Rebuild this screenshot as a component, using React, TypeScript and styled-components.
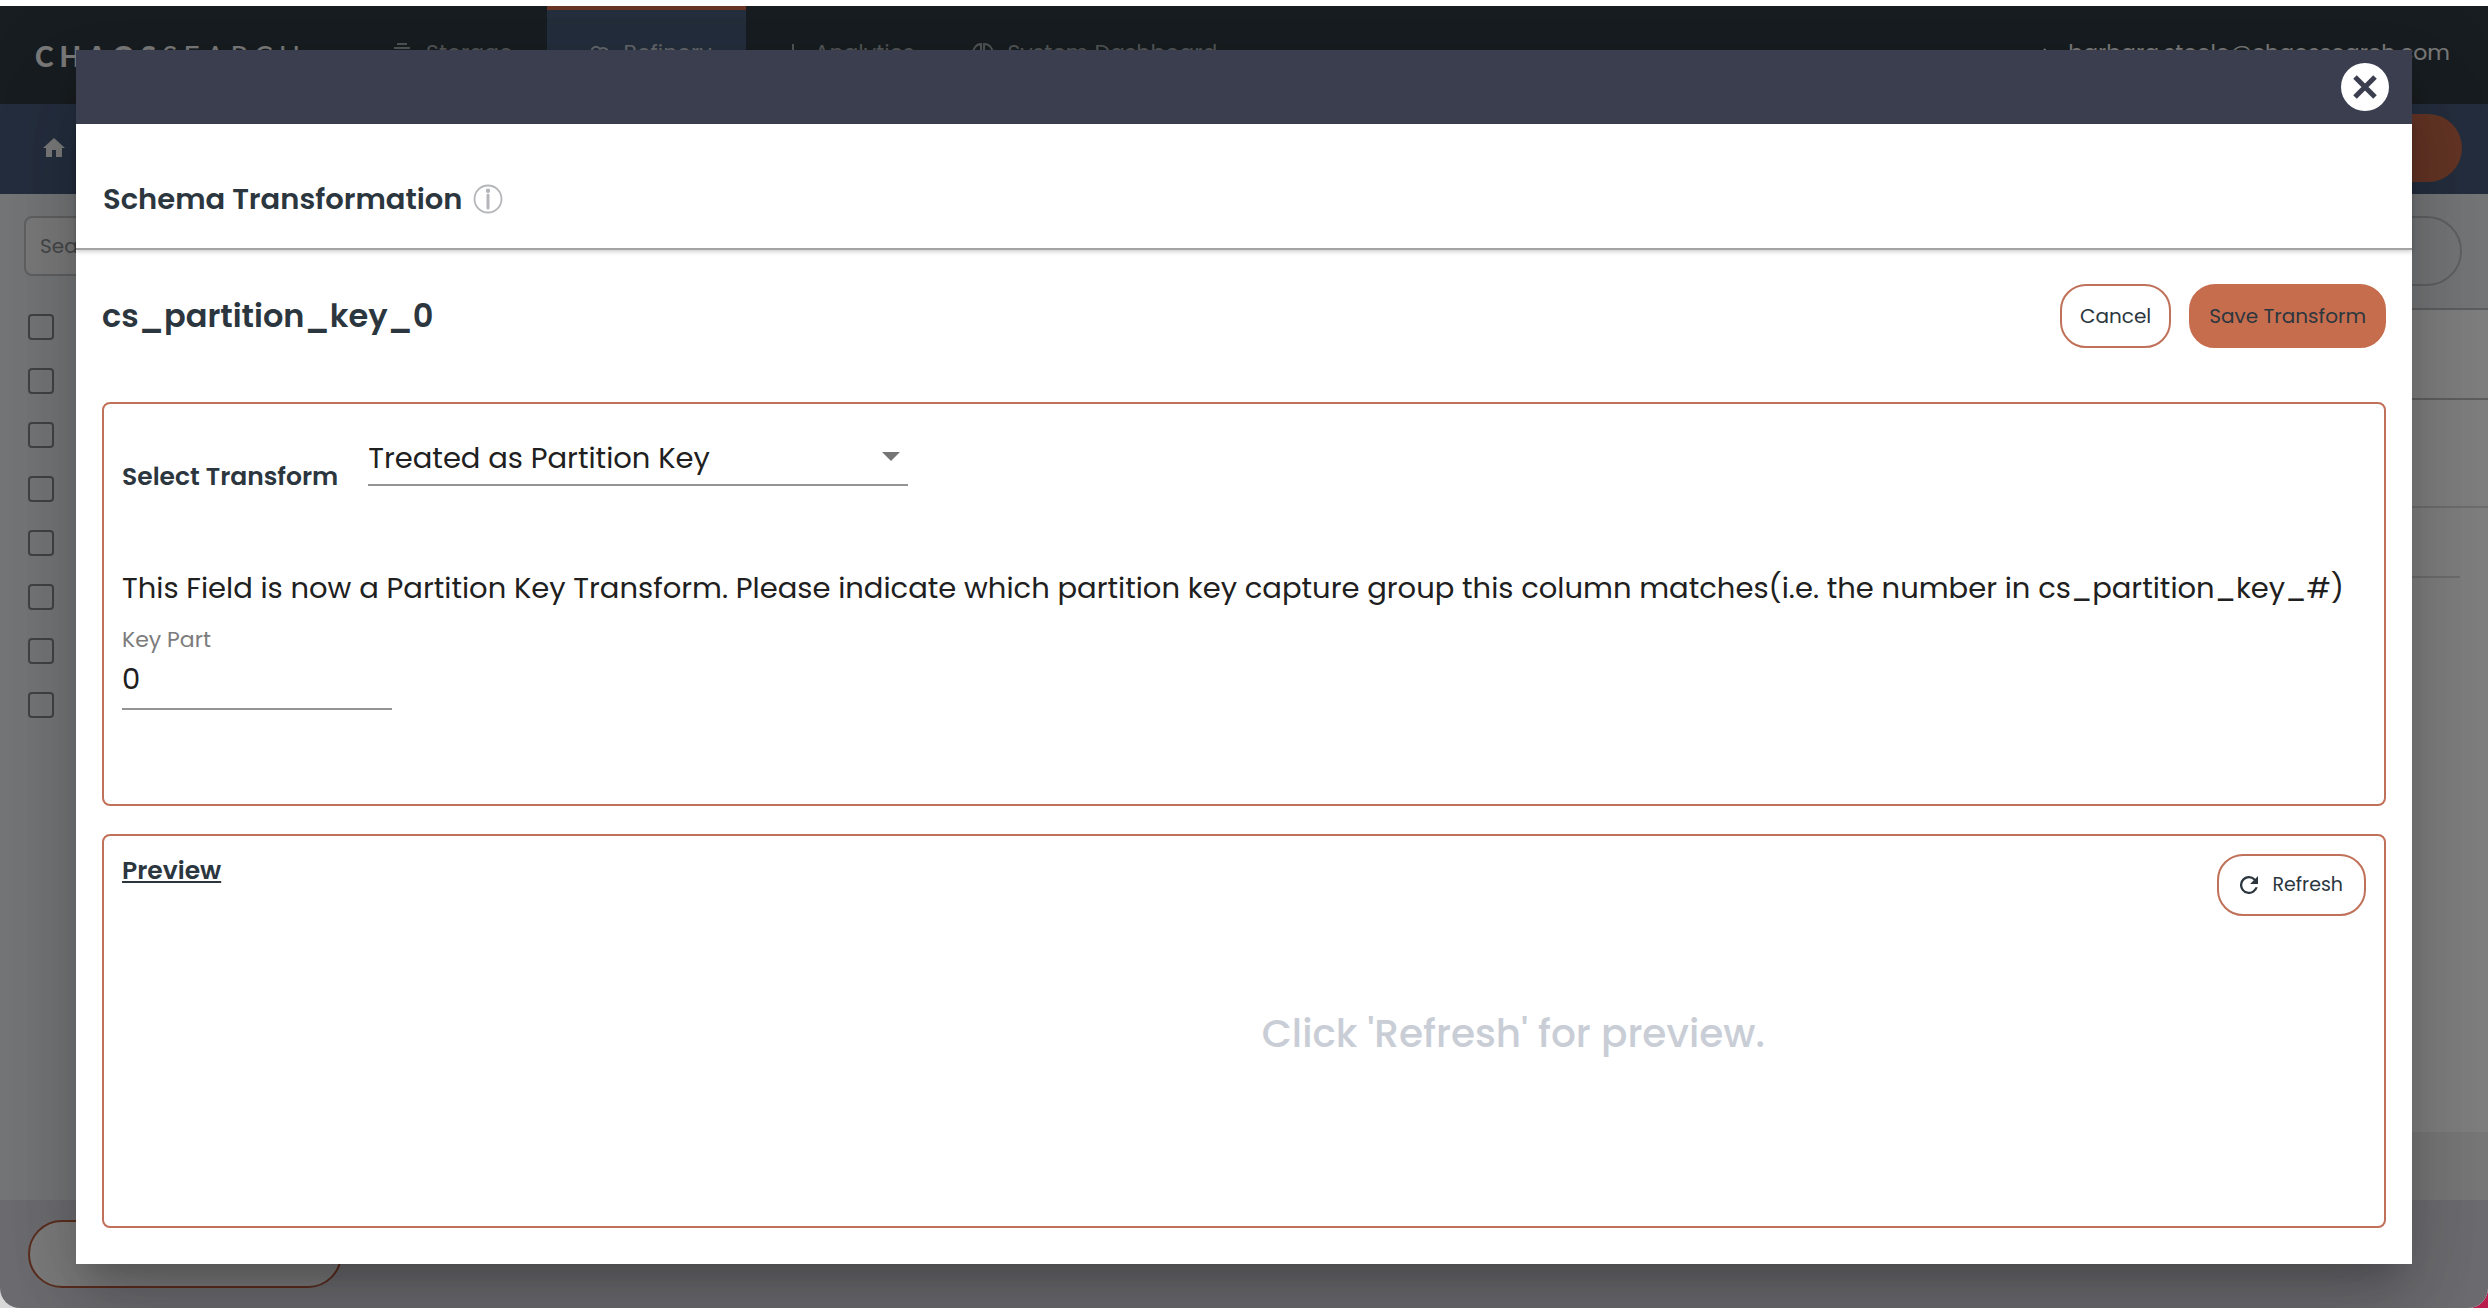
import React, { useState } from "react";
import styled, { createGlobalStyle } from "styled-components";

const color = {
  accent: "#c66d4e",
  outline: "#c07159",
  ink: "#2b363e",
  text: "#202020",
  muted: "#7c7c7c",
  rule: "#949494",
  bar: "#3a3e4f",
  hint: "#c9cdd6",
};

const GlobalStyle = createGlobalStyle`
  *, *::before, *::after { box-sizing: border-box; }
  body { margin: 0; background: #ffffff; }
  body, button, input, select { font-family: Poppins, Inter, "Liberation Sans", sans-serif; }
  h1, h2, h3, p { margin: 0; }
  button { cursor: pointer; }
`;

const Desktop = styled.div`
  min-height: 100vh;
  padding-top: 6px;
  display: flex;
  background: linear-gradient(90deg, #d8d8d8 50%, #b81d4e 50%);
`;

const Window = styled.div`
  position: relative;
  flex: 1;
  display: flex;
  flex-direction: column;
  overflow: hidden;
  border-radius: 0 0 20px 20px;
  background: #ebedef;
  box-shadow: 0 -6px 0 #ffffff;
`;

const Header = styled.header`
  display: flex;
  justify-content: space-between;
  height: 98px;
  padding-right: 38px;
  background: #2e3a40;
`;

const HeaderStart = styled.div`
  display: flex;
`;

const Logo = styled.span`
  width: 349px;
  padding: 32px 0 0 35px;
  font: 900 28px/36px Lato, sans-serif;
  letter-spacing: 6px;
  color: #f4f4f4;
  span { font-weight: 400; }
`;

const Nav = styled.nav`
  display: flex;
`;

const Tab = styled.a<{ $active?: boolean; $compact?: boolean }>`
  display: flex;
  gap: 13px;
  padding: ${(p) => (p.$compact ? "28px 24px 0 34px" : "28px 34px 0 42px")};
  border-top: 4px solid ${(p) => (p.$active ? "#d2694a" : "transparent")};
  background: ${(p) => (p.$active ? "#485d78" : "transparent")};
  color: ${(p) => (p.$active ? "#c9ced4" : "#a3a8ac")};
  font-size: 22px;
  line-height: 30px;
  text-decoration: none;
  svg { width: 22px; margin-top: 5px; }
`;

const Account = styled.button`
  display: flex;
  align-items: flex-start;
  gap: 16px;
  padding: 32px 0 0;
  border: 0;
  background: none;
  color: #f4f4f4;
  font-size: 22px;
  line-height: 30px;
  svg { margin-top: 10px; }
`;

const SubNav = styled.div`
  display: flex;
  align-items: center;
  justify-content: space-between;
  height: 90px;
  padding: 0 26px 2px 43px;
  background: #485d7c;
`;

const HomeLink = styled.a`
  display: flex;
  color: #f4f4f4;
`;

const PrimaryAction = styled.button`
  width: 240px;
  height: 68px;
  border: 0;
  border-radius: 34px;
  background: #c96a4a;
`;

const Workspace = styled.main`
  flex: 1;
  display: flex;
`;

const Sidebar = styled.aside`
  width: 30%;
  padding: 22px 24px;
`;

const SearchBox = styled.input`
  display: block;
  width: 100%;
  height: 60px;
  padding: 0 14px;
  border: 2px solid #c0c2c4;
  border-radius: 8px;
  background: #f4f4f4;
  font-size: 20px;
  &::placeholder { color: #8b8f93; opacity: 1; }
`;

const FilterList = styled.div`
  display: flex;
  flex-direction: column;
  gap: 28px;
  padding: 38px 4px;
`;

const Tick = styled.input`
  appearance: none;
  width: 26px;
  height: 26px;
  margin: 0;
  border: 2px solid #85878a;
  border-radius: 4px;
`;

const Results = styled.section`
  flex: 1;
  display: flex;
  flex-direction: column;
  background: #ffffff;
`;

const ResultTools = styled.div`
  display: flex;
  justify-content: flex-end;
  height: 116px;
  padding: 22px 26px 0;
  border-bottom: 2px solid #bcbec0;
  background: #ebedef;
`;

const ToolPill = styled.button`
  width: 240px;
  height: 70px;
  border: 2px solid #c0c2c6;
  border-radius: 35px;
  background: transparent;
`;

const ResultRow = styled.div<{ $height: number; $tone: string; $inset?: number }>`
  height: ${(p) => p.$height}px;
  margin-right: ${(p) => p.$inset ?? 0}px;
  border-bottom: 2px solid ${(p) => p.$tone};
`;

const ResultFoot = styled.div`
  height: 68px;
  margin-top: auto;
  background: #f0f1f3;
`;

const Footer = styled.footer`
  display: flex;
  height: 108px;
  padding: 20px 28px;
  background: #dadae2;
`;

const FooterPill = styled.button`
  width: 314px;
  height: 68px;
  border: 2px solid #b85c3f;
  border-radius: 34px;
  background: #f8f8f8;
`;

const Overlay = styled.div`
  position: absolute;
  inset: 0;
  display: flex;
  padding: 44px 76px;
  background: rgba(0, 0, 0, 0.5);
`;

const Dialog = styled.section`
  flex: 1;
  display: flex;
  flex-direction: column;
  min-width: 0;
  background: #ffffff;
  box-shadow: 0 22px 30px -14px rgba(0, 0, 0, 0.2), 0 48px 76px 6px rgba(0, 0, 0, 0.14),
    0 18px 92px 16px rgba(0, 0, 0, 0.08);
`;

const DialogBar = styled.div`
  display: flex;
  align-items: center;
  justify-content: flex-end;
  height: 74px;
  padding: 0 23px;
  background: ${color.bar};
`;

const CloseButton = styled.button`
  display: grid;
  place-items: center;
  width: 48px;
  height: 48px;
  padding: 0;
  border: 0;
  border-radius: 50%;
  background: #ffffff;
  color: ${color.bar};
`;

const DialogTitle = styled.div`
  display: flex;
  align-items: center;
  gap: 10px;
  padding: 52px 27px 26px;
  border-bottom: 2px solid #a3a3a3;
  box-shadow: 0 2px 4px rgba(0, 0, 0, 0.18);
  color: ${color.ink};
  h1 { font-size: 29px; line-height: 46px; font-weight: 600; }
  svg { color: #b4b6b9; }
`;

const DialogBody = styled.div`
  flex: 1;
  display: flex;
  flex-direction: column;
  padding: 34px 26px 36px;
`;

const FieldHeader = styled.div`
  display: flex;
  align-items: center;
  justify-content: space-between;
  margin-bottom: 54px;
  color: ${color.ink};
  h2 { font-size: 32px; line-height: 46px; font-weight: 600; }
`;

const Actions = styled.div`
  display: flex;
  gap: 18px;
`;

const Button = styled.button<{ $filled?: boolean; $compact?: boolean }>`
  display: flex;
  align-items: center;
  justify-content: center;
  gap: 14px;
  height: ${(p) => (p.$compact ? 62 : 64)}px;
  padding: 0 ${(p) => (p.$compact ? 21 : 18)}px;
  border: 2px solid ${(p) => (p.$filled ? color.accent : color.outline)};
  border-radius: 26px;
  background: ${(p) => (p.$filled ? color.accent : "#ffffff")};
  color: ${color.ink};
  font-size: ${(p) => (p.$compact ? 19 : 20)}px;
  line-height: 30px;
`;

const Panel = styled.section<{ $grow?: boolean }>`
  display: flex;
  flex-direction: column;
  flex: ${(p) => (p.$grow ? 1 : "none")};
  padding: 18px;
  border: 2px solid ${color.outline};
  border-radius: 8px;
  & + & { margin-top: 28px; }
`;

const SelectRow = styled.div`
  display: flex;
  align-items: flex-end;
  gap: 30px;
  padding: 12px 0 71px;
`;

const SelectLabel = styled.label`
  color: ${color.ink};
  font-size: 25px;
  line-height: 34px;
  font-weight: 600;
`;

const SelectBox = styled.div`
  display: grid;
  align-items: center;
  width: 540px;
  margin-bottom: 8px;
  svg { grid-area: 1 / 1; justify-self: end; margin: 0 8px 8px 0; color: #757575; pointer-events: none; }
`;

const Select = styled.select`
  grid-area: 1 / 1;
  appearance: none;
  width: 100%;
  height: 52px;
  padding: 0 40px 3px 0;
  border: 0;
  border-bottom: 2px solid ${color.rule};
  border-radius: 0;
  background: transparent;
  color: ${color.text};
  font-size: 29px;
  line-height: 46px;
`;

const Message = styled.p`
  color: ${color.text};
  font-size: 29px;
  line-height: 46px;
`;

const KeyField = styled.div`
  display: flex;
  flex-direction: column;
  width: 270px;
  padding-top: 14px;
  margin-bottom: 76px;
  label { color: ${color.muted}; font-size: 22px; line-height: 30px; }
  input {
    height: 55px;
    padding: 0 0 4px;
    border: 0;
    border-bottom: 2px solid ${color.rule};
    background: transparent;
    color: ${color.text};
    font-size: 29px;
    line-height: 46px;
  }
`;

const PreviewHeader = styled.div`
  display: flex;
  align-items: flex-start;
  justify-content: space-between;
  color: ${color.ink};
  h3 { font-size: 25px; line-height: 34px; font-weight: 600; text-decoration: underline; }
`;

const PreviewHint = styled.p`
  padding: 94px 0 0 24%;
  color: ${color.hint};
  font-size: 39px;
  line-height: 48px;
  font-weight: 500;
  text-align: center;
`;

const stroke = { fill: "none", stroke: "currentColor", strokeWidth: 2 } as const;

const StackIcon = () => (
  <svg width="22" height="22" viewBox="0 0 22 22" aria-hidden="true" {...stroke}>
    <path d="M6 1h10M3 5h16M1 10h5l2 4h6l2-4h5v10H1z" />
  </svg>
);
const RefineIcon = () => (
  <svg width="22" height="22" viewBox="-2 -2 22 22" aria-hidden="true" {...stroke}>
    <path d="M1 7c-1-5 5-7 8-3 3-2 8-1 8 4M3 7h4l2 3 3-3h5M4 11l5 7 6-8" />
  </svg>
);
const BarsIcon = () => (
  <svg width="22" height="22" viewBox="-4 0 22 22" aria-hidden="true" {...stroke}>
    <path d="M2 8v12M9 1v19M13 14v6" />
  </svg>
);
const PieIcon = () => (
  <svg width="22" height="22" viewBox="0 0 22 22" aria-hidden="true" {...stroke}>
    <path d="M9 1C4 1 1 6 1 10h8zM12 1v9l7 4c4-5 0-13-7-13zM1 10c0 8 10 13 17 6l-9-6" />
  </svg>
);
const HomeIcon = () => (
  <svg width="22" height="20" viewBox="0 0 22 20" fill="currentColor" aria-hidden="true">
    <path d="M11 0 0 10h3v9h6v-7h4v7h6v-9h3z" />
  </svg>
);
const CloseIcon = () => (
  <svg width="26" height="26" viewBox="0 0 26 26" aria-hidden="true">
    <path d="M3 3l20 20M23 3L3 23" stroke="currentColor" strokeWidth="5" />
  </svg>
);
const InfoIcon = () => (
  <svg width="30" height="30" viewBox="0 0 30 30" aria-hidden="true">
    <circle cx="15" cy="15" r="13.5" fill="none" stroke="currentColor" strokeWidth="1.8" />
    <circle cx="15" cy="6.8" r="2.2" fill="currentColor" />
    <path d="M15 11v13" stroke="currentColor" strokeWidth="3" strokeLinecap="round" />
  </svg>
);
const RefreshIcon = () => (
  <svg width="18" height="18" viewBox="4 4 16 16" fill="currentColor" aria-hidden="true">
    <path d="M17.65 6.35A7.96 7.96 0 0 0 12 4a8 8 0 1 0 7.73 10h-2.08A6 6 0 1 1 12 6c1.66 0 3.14.69 4.22 1.78L13 11h7V4z" />
  </svg>
);
const CaretIcon = () => (
  <svg width="18" height="9" viewBox="0 0 18 9" fill="currentColor" aria-hidden="true">
    <path d="M0 0h18L9 9z" />
  </svg>
);
const ChevronIcon = () => (
  <svg width="10" height="12" viewBox="0 0 10 12" aria-hidden="true" {...stroke}>
    <path d="M2 1l5 5-5 5" />
  </svg>
);

const filters = Array.from({ length: 8 }, (_, i) => i);

export default function App() {
  const [part, setPart] = useState("0");
  return (
    <>
      <GlobalStyle />
      <Desktop>
        <Window>
          <Header>
            <HeaderStart>
              <Logo>CHAOS<span>SEARCH</span></Logo>
              <Nav>
                <Tab href="#storage"><StackIcon />Storage</Tab>
                <Tab href="#refinery" $active><RefineIcon />Refinery</Tab>
                <Tab href="#analytics" $compact><BarsIcon />Analytics</Tab>
                <Tab href="#dashboard" $compact><PieIcon />System Dashboard</Tab>
              </Nav>
            </HeaderStart>
            <Account><ChevronIcon />barbara.steele@chaossearch.com</Account>
          </Header>
          <SubNav>
            <HomeLink href="#home" aria-label="Home"><HomeIcon /></HomeLink>
            <PrimaryAction aria-label="Create" />
          </SubNav>
          <Workspace>
            <Sidebar>
              <SearchBox placeholder="Search" aria-label="Search" />
              <FilterList>
                {filters.map((i) => (
                  <Tick key={i} type="checkbox" aria-label={`Filter ${i + 1}`} />
                ))}
              </FilterList>
            </Sidebar>
            <Results>
              <ResultTools><ToolPill aria-label="Options" /></ResultTools>
              <ResultRow $height={90} $tone="#bcbec2" />
              <ResultRow $height={108} $tone="#dcdcdc" />
              <ResultRow $height={70} $tone="#dcdcdc" $inset={28} />
              <ResultFoot />
            </Results>
          </Workspace>
          <Footer><FooterPill aria-label="Selection" /></Footer>

          <Overlay>
            <Dialog role="dialog" aria-modal="true" aria-labelledby="dialog-title">
              <DialogBar>
                <CloseButton aria-label="Close"><CloseIcon /></CloseButton>
              </DialogBar>
              <DialogTitle>
                <h1 id="dialog-title">Schema Transformation</h1>
                <InfoIcon />
              </DialogTitle>
              <DialogBody>
                <FieldHeader>
                  <h2>cs_partition_key_0</h2>
                  <Actions>
                    <Button>Cancel</Button>
                    <Button $filled>Save Transform</Button>
                  </Actions>
                </FieldHeader>
                <Panel>
                  <SelectRow>
                    <SelectLabel htmlFor="transform">Select Transform</SelectLabel>
                    <SelectBox>
                      <Select id="transform">
                        <option>Treated as Partition Key</option>
                      </Select>
                      <CaretIcon />
                    </SelectBox>
                  </SelectRow>
                  <Message>
                    This Field is now a Partition Key Transform. Please indicate which partition key
                    capture group this column matches(i.e. the number in cs_partition_key_#)
                  </Message>
                  <KeyField>
                    <label htmlFor="key-part">Key Part</label>
                    <input id="key-part" value={part} onChange={(e) => setPart(e.target.value)} />
                  </KeyField>
                </Panel>
                <Panel $grow>
                  <PreviewHeader>
                    <h3>Preview</h3>
                    <Button $compact><RefreshIcon />Refresh</Button>
                  </PreviewHeader>
                  <PreviewHint>Click 'Refresh' for preview.</PreviewHint>
                </Panel>
              </DialogBody>
            </Dialog>
          </Overlay>
        </Window>
      </Desktop>
    </>
  );
}
